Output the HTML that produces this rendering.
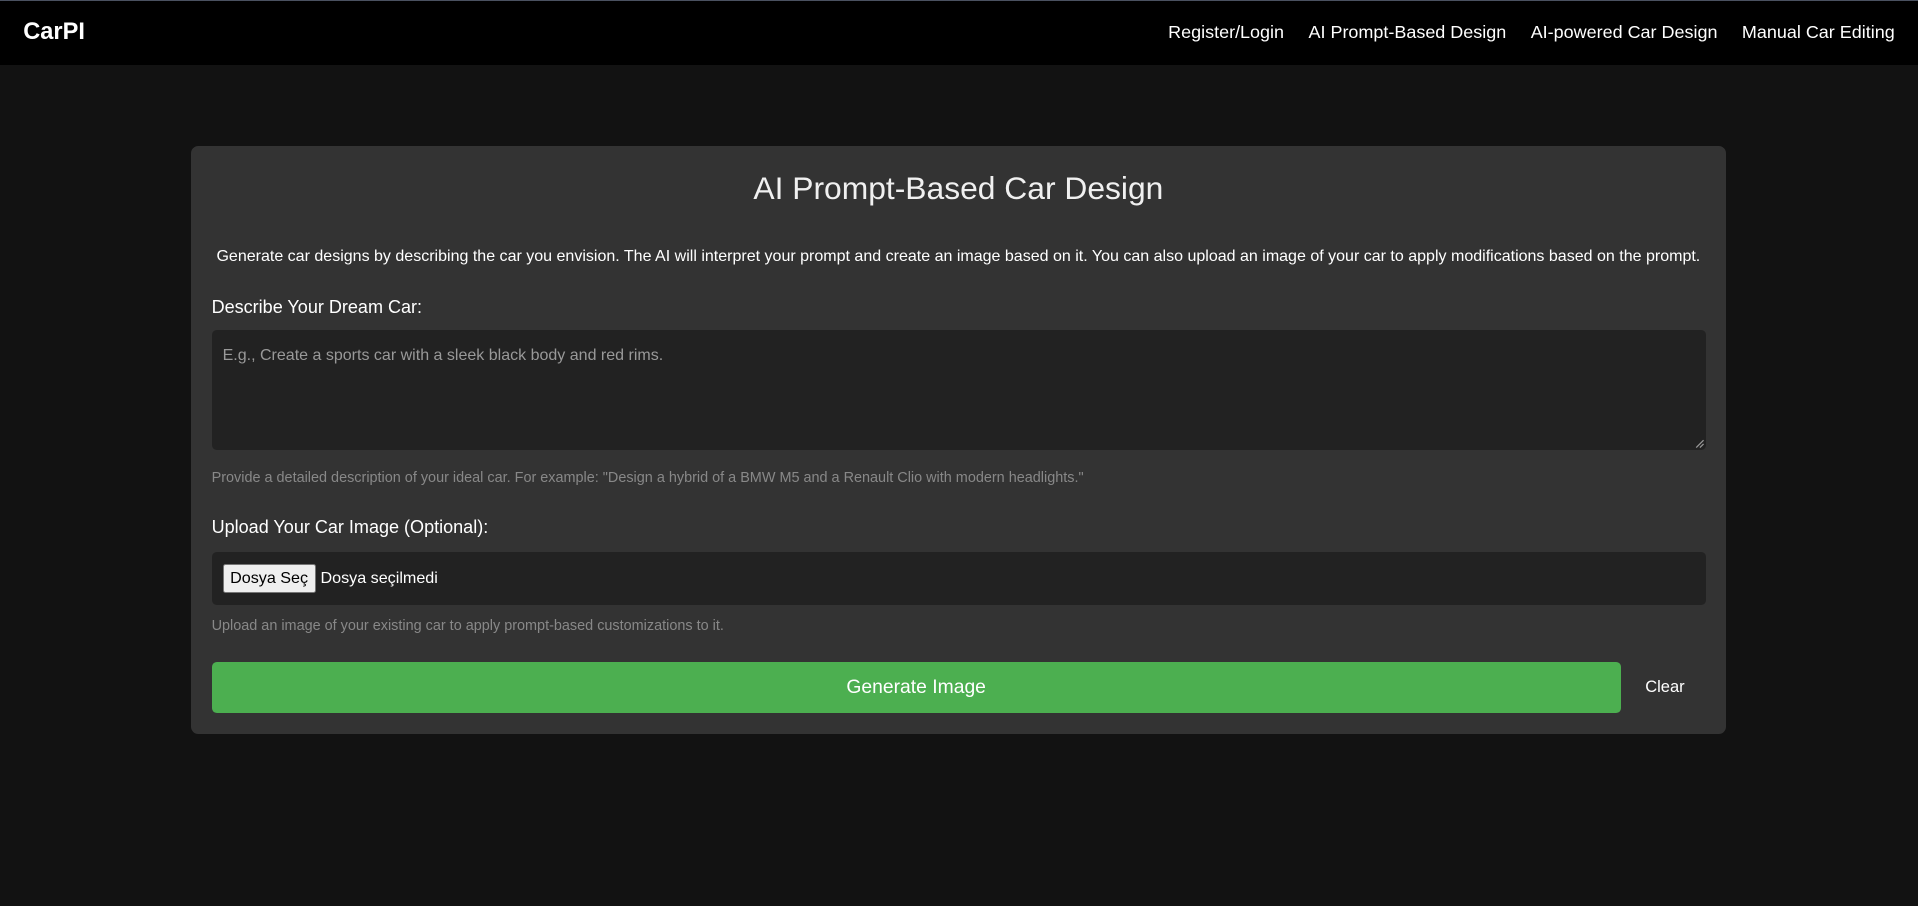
<!DOCTYPE html>
<html><head><meta charset="utf-8"><style>
html{zoom:1.2232}
body{margin:0;width:1568px;height:741px;background:#121212;font-family:"Liberation Sans",Arial,sans-serif;color:#fff;position:relative;overflow:hidden}
.nav{position:absolute;left:0;top:0;width:1568px;height:53px;background:#000;border-top:1px solid #4a5160;box-sizing:border-box}
.logo{position:absolute;left:19px;top:15px;font-size:19.3px;font-weight:bold}
.links{position:absolute;right:19px;top:17px;font-size:14.7px;display:flex;gap:20px}
.card{position:absolute;left:156px;top:119px;width:1255px;height:481px;background:#333;border-radius:6px}
.a{position:absolute;white-space:nowrap}
h1{position:absolute;left:0;width:1255px;top:20px;margin:0;text-align:center;font-weight:normal;font-size:26px;color:#f0f0f0}
.box{position:absolute;left:17px;width:1222px;background:#222;border-radius:4px}
.fbtn{position:absolute;left:9px;top:10px;width:76px;height:24px;background:#efefef;border:1px solid #767676;border-radius:2px;box-sizing:border-box;color:#000;font-size:13.2px;text-align:center;line-height:22px}
.gen{position:absolute;left:17px;top:422px;width:1152px;height:42px;background:#4caf50;border-radius:4px;text-align:center;line-height:42px;font-size:15.8px}
</style></head><body>
<div class="nav"><div class="logo">CarPI</div>
<div class="links"><span>Register/Login</span><span>AI Prompt-Based Design</span><span>AI-powered Car Design</span><span>Manual Car Editing</span></div></div>
<div class="card">
<h1>AI Prompt-Based Car Design</h1>
<div class="a" style="left:0;width:1255px;text-align:center;top:83px;font-size:13.1px">Generate car designs by describing the car you envision. The AI will interpret your prompt and create an image based on it. You can also upload an image of your car to apply modifications based on the prompt.</div>
<div class="a" style="left:17px;top:124px;font-size:14.75px">Describe Your Dream Car:</div>
<div class="box" style="top:151px;height:98px"><div class="a" style="left:9px;top:13px;font-size:13.1px;color:#999">E.g., Create a sports car with a sleek black body and red rims.</div>
<svg class="a" style="right:2px;bottom:2px" width="7" height="7"><path d="M1 7L7 1M4 7L7 4" stroke="#999" stroke-width="1"/></svg></div>
<div class="a" style="left:17px;top:265px;font-size:11.8px;color:#888">Provide a detailed description of your ideal car. For example: "Design a hybrid of a BMW M5 and a Renault Clio with modern headlights."</div>
<div class="a" style="left:17px;top:304px;font-size:14.75px">Upload Your Car Image (Optional):</div>
<div class="box" style="top:332px;height:44px"><div class="fbtn">Dosya Seç</div><div class="a" style="left:89px;top:14px;font-size:13.2px">Dosya seçilmedi</div></div>
<div class="a" style="left:17px;top:386px;font-size:11.8px;color:#888">Upload an image of your existing car to apply prompt-based customizations to it.</div>
<div class="gen">Generate Image</div>
<div class="a" style="left:1189px;top:435px;font-size:13.5px">Clear</div>
</div>
</body></html>
